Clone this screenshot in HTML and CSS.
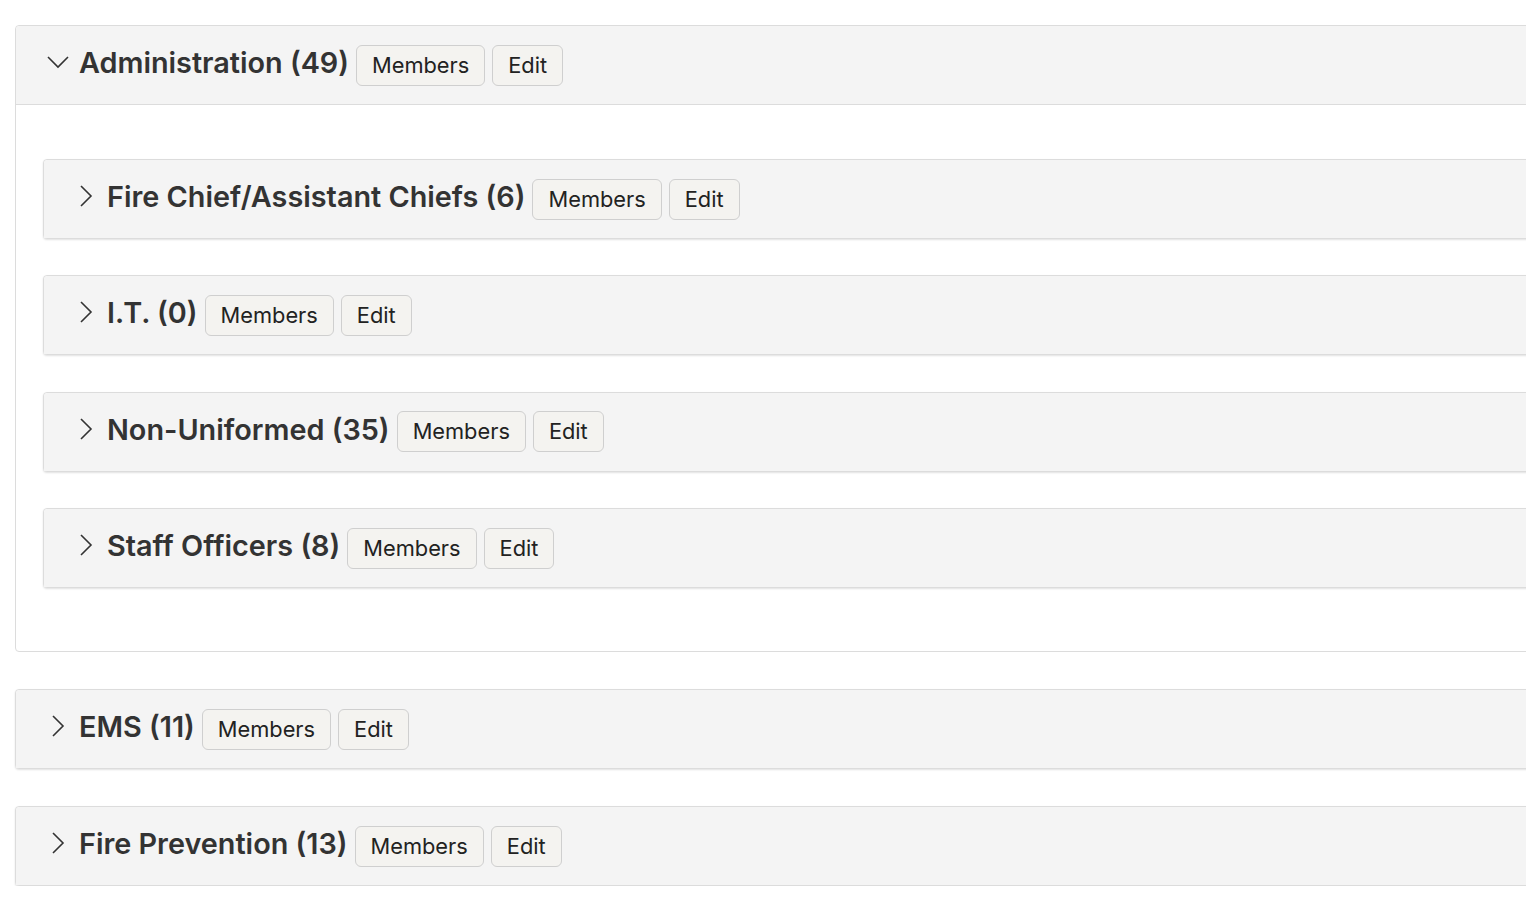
FILE: index.html
```html
<!DOCTYPE html>
<html lang="en">
<head>
    <meta charset="UTF-8">
    <meta name="viewport" content="width=device-width, initial-scale=1.0">
    <title>Groups</title>
    <link rel="stylesheet" href="styles.css">
</head>
<body>
    <div class="groups">
        <div class="group open">
            <div class="group-header">
                <svg class="chevron" viewBox="0 0 24 24"><path d="M2 7l10 10 10-10"/></svg>
                <h2>Administration (49)</h2>
                <button>Members</button>
                <button>Edit</button>
            </div>
            <div class="group-body">
                <div class="group">
                    <div class="group-header">
                        <svg class="chevron" viewBox="0 0 24 24"><path d="M7 2l10 10-10 10"/></svg>
                        <h2>Fire Chief/Assistant Chiefs (6)</h2>
                        <button>Members</button>
                        <button>Edit</button>
                    </div>
                </div>
                <div class="group">
                    <div class="group-header">
                        <svg class="chevron" viewBox="0 0 24 24"><path d="M7 2l10 10-10 10"/></svg>
                        <h2>I.T. (0)</h2>
                        <button>Members</button>
                        <button>Edit</button>
                    </div>
                </div>
                <div class="group">
                    <div class="group-header">
                        <svg class="chevron" viewBox="0 0 24 24"><path d="M7 2l10 10-10 10"/></svg>
                        <h2>Non-Uniformed (35)</h2>
                        <button>Members</button>
                        <button>Edit</button>
                    </div>
                </div>
                <div class="group">
                    <div class="group-header">
                        <svg class="chevron" viewBox="0 0 24 24"><path d="M7 2l10 10-10 10"/></svg>
                        <h2>Staff Officers (8)</h2>
                        <button>Members</button>
                        <button>Edit</button>
                    </div>
                </div>
            </div>
        </div>
        <div class="group">
            <div class="group-header">
                <svg class="chevron" viewBox="0 0 24 24"><path d="M7 2l10 10-10 10"/></svg>
                <h2>EMS (11)</h2>
                <button>Members</button>
                <button>Edit</button>
            </div>
        </div>
        <div class="group">
            <div class="group-header">
                <svg class="chevron" viewBox="0 0 24 24"><path d="M7 2l10 10-10 10"/></svg>
                <h2>Fire Prevention (13)</h2>
                <button>Members</button>
                <button>Edit</button>
            </div>
        </div>
    </div>
</body>
</html>
```

FILE: styles.css
```css
body {
    font-family: Inter, "Noto Sans", sans-serif;
    background-color: #fff;
    margin: 0;
    color: #333;
    overflow: hidden;
}
.groups {
    width: 1600px;
    padding: 25px 0 0 15px;
    display: flex;
    flex-direction: column;
    gap: 37px;
}
.group {
    background: #fff;
    border: 1px solid #dcdcdc;
    border-radius: 4px;
    box-shadow: 0 1px 2px rgba(0, 0, 0, 0.12);
}
.group.open {
    box-shadow: none;
}
.group-header {
    display: flex;
    align-items: center;
    height: 78px;
    padding: 0 30px;
    background: #f4f4f4;
    border-radius: 4px 4px 0 0;
}
.group.open > .group-header {
    border-bottom: 1px solid #dcdcdc;
}
.chevron {
    width: 24px;
    height: 24px;
    margin: 0 9px 0 0;
    position: relative;
    top: -3px;
    fill: none;
    stroke: #333;
    stroke-width: 1.6;
}
.group-header h2 {
    margin: 0 7px 0 0;
    font-size: 28.8px;
    font-weight: 600;
    line-height: 34px;
    position: relative;
    top: -2px;
}
.group-header button {
    font-family: inherit;
    font-size: 21.8px;
    line-height: 25px;
    color: #222;
    background: #f4f3f0;
    border: 1px solid #cfcfcf;
    border-radius: 6px;
    padding: 7px 15px;
    margin-right: 7px;
    cursor: pointer;
}
.group-body {
    display: flex;
    flex-direction: column;
    gap: 36.4px;
    padding: 54px 0 63px 27px;
}
```
